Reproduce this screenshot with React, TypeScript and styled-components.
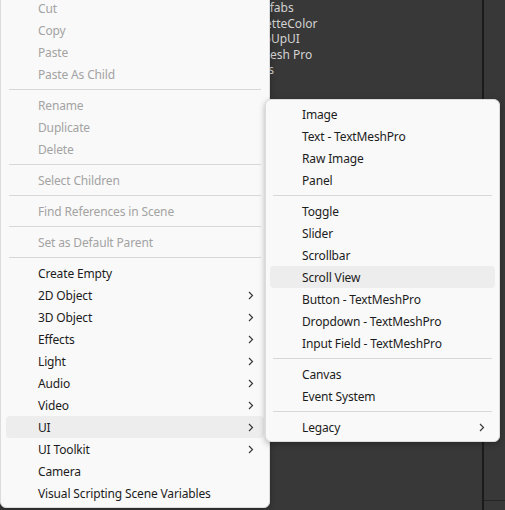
import React from 'react';
import styled, { createGlobalStyle } from 'styled-components';

const GlobalStyle = createGlobalStyle`
  html, body {
    margin: 0;
    padding: 0;
    background: #383838;
  }
  * {
    box-sizing: border-box;
  }
`;

const Editor = styled.div`
  position: relative;
  width: 505px;
  height: 510px;
  overflow: hidden;
  display: flex;
  background: #383838;
  font-family: 'Noto Sans', 'Noto Sans CJK KR', sans-serif;
`;

const HierarchyPanel = styled.div`
  flex: 0 0 484px;
  border-right: 2px solid #1b1b1b;
`;

const InspectorPanel = styled.div`
  flex: 1;
  height: 501px;
  border-bottom: 1px solid #262626;
`;

const TreeRow = styled.div<{ $indent: number }>`
  height: 15.5px;
  line-height: 15.5px;
  padding-left: ${(p) => p.$indent}px;
  font-size: 12px;
  color: #d2d2d2;
  white-space: nowrap;
`;

const Menu = styled.div<{ $left: number; $top: number; $width: number; $padX: number }>`
  position: absolute;
  left: ${(p) => p.$left}px;
  top: ${(p) => p.$top}px;
  width: ${(p) => p.$width}px;
  padding: 3px ${(p) => p.$padX}px;
  background: #f9f9f9;
  border: 1px solid #dcdcdc;
  border-radius: 6px;
  box-shadow: 0 2px 6px rgba(0, 0, 0, 0.28);
  display: flex;
  flex-direction: column;
`;

const Item = styled.div<{ $disabled?: boolean; $active?: boolean }>`
  height: 22px;
  display: flex;
  align-items: center;
  justify-content: space-between;
  padding: 0 10px 0 32px;
  border-radius: 4px;
  font-size: 12px;
  letter-spacing: -0.15px;
  color: ${(p) => (p.$disabled ? '#a3a3a3' : '#1c1c1c')};
  background: ${(p) => (p.$active ? '#ededed' : 'transparent')};
  white-space: nowrap;
`;

const Separator = styled.div`
  height: 1px;
  margin: 4px 3px;
  background: #d8d8d8;
`;

const Chevron = () => (
  <svg width="6" height="9" viewBox="0 0 6 9">
    <polyline points="1,1 4.5,4.5 1,8" fill="none" stroke="#3a3a3a" strokeWidth="1.2" />
  </svg>
);

type Entry = { label: string; disabled?: boolean; sub?: boolean; active?: boolean } | '-';

const contextMenu: Entry[] = [
  { label: 'Cut', disabled: true },
  { label: 'Copy', disabled: true },
  { label: 'Paste', disabled: true },
  { label: 'Paste As Child', disabled: true },
  '-',
  { label: 'Rename', disabled: true },
  { label: 'Duplicate', disabled: true },
  { label: 'Delete', disabled: true },
  '-',
  { label: 'Select Children', disabled: true },
  '-',
  { label: 'Find References in Scene', disabled: true },
  '-',
  { label: 'Set as Default Parent', disabled: true },
  '-',
  { label: 'Create Empty' },
  { label: '2D Object', sub: true },
  { label: '3D Object', sub: true },
  { label: 'Effects', sub: true },
  { label: 'Light', sub: true },
  { label: 'Audio', sub: true },
  { label: 'Video', sub: true },
  { label: 'UI', sub: true, active: true },
  { label: 'UI Toolkit', sub: true },
  { label: 'Camera' },
  { label: 'Visual Scripting Scene Variables' },
];

const uiMenu: Entry[] = [
  { label: 'Image' },
  { label: 'Text - TextMeshPro' },
  { label: 'Raw Image' },
  { label: 'Panel' },
  '-',
  { label: 'Toggle' },
  { label: 'Slider' },
  { label: 'Scrollbar' },
  { label: 'Scroll View', active: true },
  { label: 'Button - TextMeshPro' },
  { label: 'Dropdown - TextMeshPro' },
  { label: 'Input Field - TextMeshPro' },
  '-',
  { label: 'Canvas' },
  { label: 'Event System' },
  '-',
  { label: 'Legacy', sub: true },
];

const tree = [
  { name: 'Prefabs', indent: 251 },
  { name: 'PaletteColor', indent: 248 },
  { name: 'PopUpUI', indent: 249 },
  { name: 'TextMesh Pro', indent: 236 },
  { name: 'Scenes', indent: 235 },
];

function MenuEntries({ entries }: { entries: Entry[] }) {
  return (
    <>
      {entries.map((e, i) =>
        e === '-' ? (
          <Separator key={i} />
        ) : (
          <Item key={i} $disabled={e.disabled} $active={e.active}>
            <span>{e.label}</span>
            {e.sub && <Chevron />}
          </Item>
        )
      )}
    </>
  );
}

export default function App() {
  return (
    <Editor>
      <GlobalStyle />
      <HierarchyPanel>
        {tree.map((t) => (
          <TreeRow key={t.name} $indent={t.indent}>
            {t.name}
          </TreeRow>
        ))}
      </HierarchyPanel>
      <InspectorPanel />

      <Menu $left={0} $top={-7} $width={270} $padX={5}>
        <MenuEntries entries={contextMenu} />
      </Menu>

      <Menu $left={265} $top={99} $width={235} $padX={4}>
        <MenuEntries entries={uiMenu} />
      </Menu>
    </Editor>
  );
}
